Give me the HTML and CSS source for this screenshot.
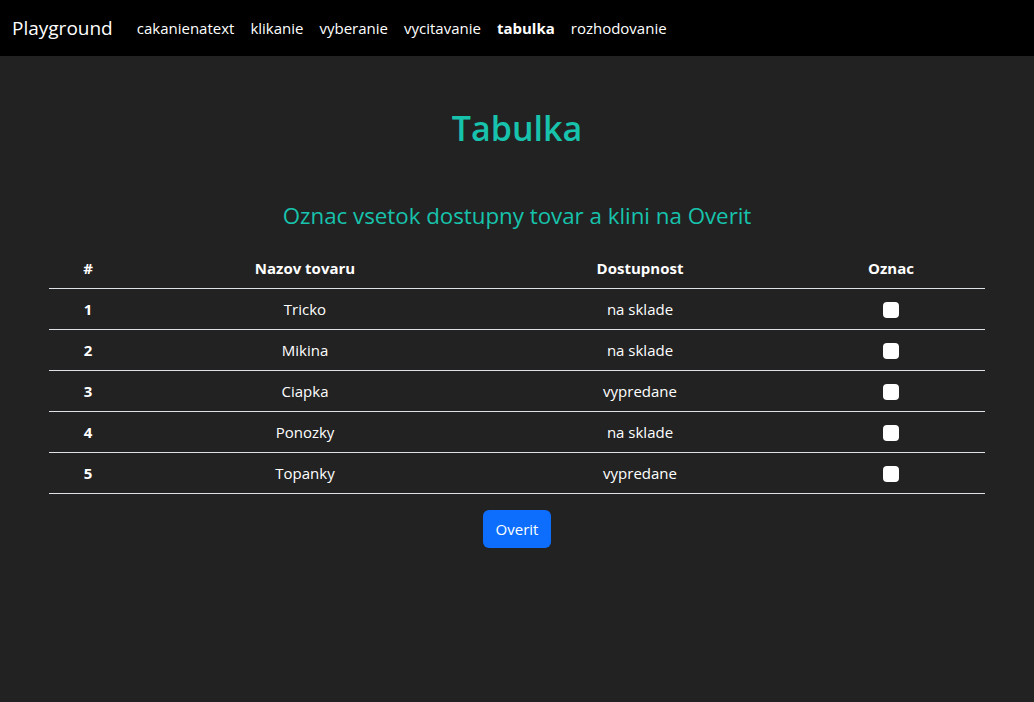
FILE: index.html
```html
<!DOCTYPE html>
<html lang="sk">
<head>
<meta charset="utf-8">
<title>Tabulka</title>
<link rel="stylesheet" href="styles.css">
</head>
<body>
<nav class="navbar">
  <a class="brand" href="#">Playground</a>
  <ul class="nav">
    <li><a href="#">cakanienatext</a></li>
    <li><a href="#">klikanie</a></li>
    <li><a href="#">vyberanie</a></li>
    <li><a href="#">vycitavanie</a></li>
    <li><a class="active" href="#">tabulka</a></li>
    <li><a href="#">rozhodovanie</a></li>
  </ul>
</nav>
<main class="container">
  <h1 class="title">Tabulka</h1>
  <h4 class="subtitle">Oznac vsetok dostupny tovar a klini na Overit</h4>
  <table class="table">
    <thead>
      <tr>
        <th class="c1">#</th>
        <th class="c2">Nazov tovaru</th>
        <th class="c3">Dostupnost</th>
        <th class="c4">Oznac</th>
      </tr>
    </thead>
    <tbody>
      <tr><th>1</th><td>Tricko</td><td>na sklade</td><td><span class="check"></span></td></tr>
      <tr><th>2</th><td>Mikina</td><td>na sklade</td><td><span class="check"></span></td></tr>
      <tr><th>3</th><td>Ciapka</td><td>vypredane</td><td><span class="check"></span></td></tr>
      <tr><th>4</th><td>Ponozky</td><td>na sklade</td><td><span class="check"></span></td></tr>
      <tr><th>5</th><td>Topanky</td><td>vypredane</td><td><span class="check"></span></td></tr>
    </tbody>
  </table>
  <div class="actions">
    <button class="btn" type="button">Overit</button>
  </div>
</main>
</body>
</html>
```
FILE: styles.css
```css
* { box-sizing: border-box; }
html, body { margin: 0; padding: 0; }
body {
  background: #222222;
  color: #ffffff;
  font-family: "Open Sans", "Noto Sans", sans-serif;
  font-size: 15px;
  line-height: 1.5;
  height: 702px;
}
.navbar {
  background: #000000;
  height: 56px;
  display: flex;
  align-items: center;
  padding: 0 12px;
}
.brand {
  color: #ffffff;
  text-decoration: none;
  font-size: 19px;
  margin-right: 16px;
}
.nav {
  list-style: none;
  margin: 0;
  padding: 0;
  display: flex;
}
.nav a {
  display: block;
  color: #ffffff;
  text-decoration: none;
  padding: 8px 8px;
}
.nav a.active { font-weight: 700; }
.container {
  width: 960px;
  margin: 0 auto;
  padding: 0 12px;
}
.title {
  text-align: center;
  color: #17c3ac;
  font-size: 34px;
  font-weight: 600;
  line-height: 48px;
  margin: 48px 0 0;
}
.subtitle {
  text-align: center;
  color: #17c3ac;
  font-size: 22.3px;
  font-weight: 400;
  line-height: 29px;
  margin: 49px 0 18px;
}
.table {
  width: 100%;
  border-collapse: collapse;
  margin-bottom: 16px;
}
.table th, .table td {
  text-align: center;
  padding: 8px;
  line-height: 24px;
  border-bottom: 1px solid #dee2e6;
  vertical-align: middle;
}
.table th { font-weight: 700; }
.c1 { width: 78px; }
.c2 { width: 356px; }
.c3 { width: 314px; }
.c4 { width: 188px; }
.check {
  display: inline-block;
  width: 16px;
  height: 16px;
  background: #ffffff;
  border-radius: 4px;
  vertical-align: -3px;
}
.actions { text-align: center; }
.btn {
  background: #0d6efd;
  color: #ffffff;
  border: none;
  border-radius: 6px;
  font-family: inherit;
  font-size: 15px;
  line-height: 24px;
  padding: 7px 13px;
  cursor: pointer;
}
```
